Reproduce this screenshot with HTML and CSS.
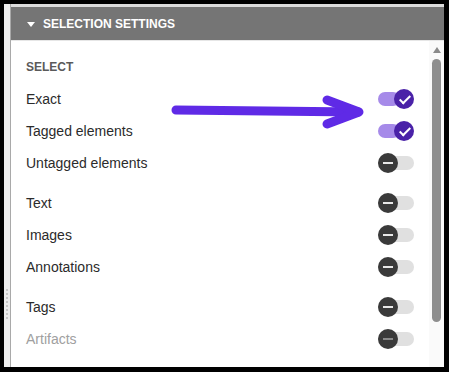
FILE: index.html
```html
<!DOCTYPE html>
<html>
<head>
  <meta charset="utf-8">
  <title>Selection settings</title>
  <link rel="stylesheet" href="styles.css">
</head>
<body>
  <div class="panel">
    <div class="grip"><span class="dots"></span></div>

    <div class="main">
      <div class="header">
        <span class="caret"></span>
        <span class="title">SELECTION SETTINGS</span>
      </div>

      <div class="content">
        <div class="list">
          <div class="label">SELECT</div>

          <div class="group">
            <div class="row"><span>Exact</span><span class="toggle on"><i></i></span></div>
            <div class="row"><span>Tagged elements</span><span class="toggle on"><i></i></span></div>
            <div class="row"><span>Untagged elements</span><span class="toggle"><i></i></span></div>
          </div>

          <div class="group">
            <div class="row"><span>Text</span><span class="toggle"><i></i></span></div>
            <div class="row"><span>Images</span><span class="toggle"><i></i></span></div>
            <div class="row"><span>Annotations</span><span class="toggle"><i></i></span></div>
          </div>

          <div class="group">
            <div class="row"><span>Tags</span><span class="toggle"><i></i></span></div>
            <div class="row disabled"><span>Artifacts</span><span class="toggle"><i></i></span></div>
          </div>
        </div>

        <div class="scrollbar">
          <span class="up"></span>
          <span class="thumb"></span>
        </div>
      </div>
    </div>

    <!-- annotation arrow -->
    <svg class="arrow" width="200" height="44" viewBox="0 0 200 44">
      <path d="M8 20 L190 22" stroke="#5f2ae6" stroke-width="9" stroke-linecap="round" fill="none"/>
      <path d="M159 10 L191 22 L159 34" stroke="#5f2ae6" stroke-width="9" stroke-linecap="round" stroke-linejoin="round" fill="none"/>
    </svg>
  </div>
</body>
</html>
```

FILE: styles.css
```css
html, body {
  margin: 0;
  padding: 0;
  background: #000;
}

body {
  padding: 4px 5px 5px 4px;
  font-family: "Liberation Sans", Arial, sans-serif;
}

.panel {
  position: relative;
  display: flex;
  height: 363px;
  background: #fff;
}

.grip {
  width: 6px;
  background: #eeeeee;
  border-right: 1px solid #a9a9a9;
  display: flex;
  justify-content: center;
  padding-top: 285px;
}

.dots {
  width: 2px;
  height: 30px;
  background: repeating-linear-gradient(to bottom, #c8c8c8 0 2px, transparent 2px 4px);
}

.main {
  flex: 1;
  display: flex;
  flex-direction: column;
  border-top: 3px solid #dcdcdc;
}

.header {
  height: 33px;
  background: #757575;
  display: flex;
  align-items: center;
  padding-left: 15px;
  border-bottom: 1px solid #e6e6e6;
}

.caret {
  width: 0;
  height: 0;
  border-left: 4px solid transparent;
  border-right: 4px solid transparent;
  border-top: 5px solid #fff;
  margin: 2px 8px 0 1px;
}

.title {
  color: #fff;
  font-weight: bold;
  font-size: 12px;
}

.content {
  flex: 1;
  display: flex;
}

.list {
  flex: 1;
  padding: 18px 15px 0 15px;
}

.label {
  height: 16px;
  line-height: 16px;
  font-size: 12px;
  font-weight: bold;
  color: #5a5a5a;
  margin-bottom: 8px;
}

.group {
  margin-bottom: 8px;
}

.row {
  height: 32px;
  display: flex;
  align-items: center;
  justify-content: space-between;
  font-size: 14px;
  color: #2b2b2b;
}

.row.disabled {
  color: #a0a0a0;
}

.toggle {
  position: relative;
  width: 36px;
  height: 14px;
  border-radius: 7px;
  background: #e0e0e0;
}

.toggle i {
  position: absolute;
  left: 0;
  top: -3px;
  width: 20px;
  height: 20px;
  border-radius: 50%;
  background: #3a3a3a;
}

.toggle i::after {
  content: "";
  position: absolute;
  left: 5px;
  top: 9px;
  width: 10px;
  height: 2px;
  background: #e8e8e8;
}

.row.disabled .toggle i::after {
  background: #8a8a8a;
}

.toggle.on {
  background: #a68ae9;
  width: 22px;
  margin-right: 14px;
}

.toggle.on i {
  left: 16px;
  background: #4a22a8;
}

.toggle.on i::after {
  left: 8px;
  top: 4px;
  width: 4px;
  height: 9px;
  background: none;
  border-right: 2px solid #fff;
  border-bottom: 2px solid #fff;
  transform: rotate(45deg);
}

.scrollbar {
  width: 15px;
  background: #fafafa;
  display: flex;
  flex-direction: column;
  align-items: center;
}

.up {
  width: 0;
  height: 0;
  border-left: 4px solid transparent;
  border-right: 4px solid transparent;
  border-bottom: 6px solid #8a8a8a;
  margin-top: 6px;
}

.thumb {
  width: 9px;
  height: 263px;
  margin-top: 6px;
  border-radius: 5px;
  background: #8e8e8e;
}

.arrow {
  position: absolute;
  left: 164px;
  top: 86px;
}
```
